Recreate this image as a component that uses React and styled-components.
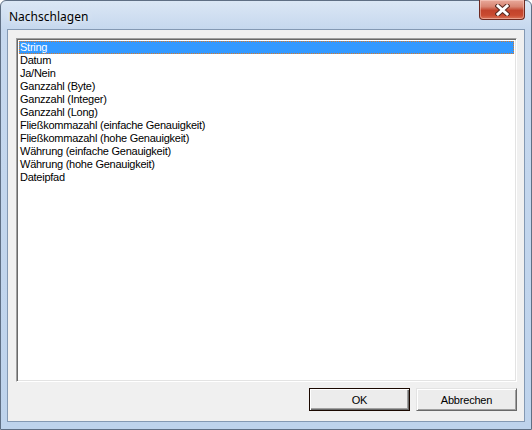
import React, { useState } from "react";
import styled, { createGlobalStyle } from "styled-components";

const Global = createGlobalStyle`
  html, body { margin: 0; padding: 0; background: #ffffff; }
  body { width: 532px; height: 430px; overflow: hidden; }
  * { box-sizing: border-box; }
`;

const Window = styled.div`
  width: 532px;
  height: 430px;
  border: 1px solid #5f6f84;
  border-radius: 6px 6px 0 0;
  background: linear-gradient(to bottom, #dbe7f5 0px, #c6d8ee 28px, #bed3ec 100%);
  padding: 0 6px 7px 6px;
  display: flex;
  flex-direction: column;
  font-family: "Liberation Sans", Arial, sans-serif;
`;

const TitleBar = styled.div`
  height: 28px;
  display: flex;
  align-items: flex-start;
  justify-content: space-between;
`;

const Title = styled.div`
  font-family: "Noto Sans", "Open Sans", sans-serif;
  font-size: 12px;
  color: #000;
  padding: 7px 0 0 2px;
  text-shadow: 0 0 6px rgba(255, 255, 255, 0.9);
`;

const CloseButton = styled.div`
  width: 46px;
  height: 20px;
  margin-top: -1px;
  margin-right: 0px;
  border: 1px solid #6e2a20;
  border-top: none;
  border-radius: 0 0 4px 4px;
  background: linear-gradient(to bottom, #e9a99b 0%, #d88572 35%, #c2432c 55%, #c94a30 80%, #d9745a 100%);
  box-shadow: inset 0 0 0 1px rgba(255, 220, 210, 0.45);
  display: flex;
  align-items: center;
  justify-content: center;
`;

const Client = styled.div`
  flex: 1;
  border: 1px solid #8499b3;
  background: #f0f0f0;
  padding: 8px 7px 9px 8px;
  display: flex;
  flex-direction: column;
`;

const ListBox = styled.div`
  height: 344px;
  background: #fff;
  border-style: solid;
  border-width: 1px;
  border-color: #a0a0a0 #ffffff #ffffff #a0a0a0;
  box-shadow: inset 1px 1px 0 #696969, inset -1px -1px 0 #e3e3e3;
  padding: 2px;
  display: flex;
  flex-direction: column;
`;

const Item = styled.div`
  height: 13px;
  line-height: 13px;
  font-size: 11px;
  letter-spacing: -0.25px;
  padding-left: 1px;
  white-space: nowrap;
  color: ${(p) => (p.$selected ? "#fff" : "#000")};
  background: ${(p) => (p.$selected ? "#3399ff" : "transparent")};
  outline: ${(p) => (p.$selected ? "1px dotted #d97a2a" : "none")};
  outline-offset: -1px;
`;

const ButtonRow = styled.div`
  margin-top: 6px;
  display: flex;
  justify-content: flex-end;
  gap: 6px;
`;

const Button = styled.div`
  width: 101px;
  height: 23px;
  font-size: 11px;
  letter-spacing: -0.2px;
  color: #000;
  display: flex;
  align-items: center;
  justify-content: center;
  background: #ececec;
  border: 1px solid;
  border-color: ${(p) => (p.$default ? "#1a0800" : "#e3e3e3 #696969 #696969 #e3e3e3")};
  box-shadow: ${(p) =>
    p.$default
      ? "inset 1px 1px 0 #fff, inset -1px -1px 0 #696969, inset -2px -2px 0 #a0a0a0"
      : "inset 1px 1px 0 #fff, inset -1px -1px 0 #a0a0a0"};
`;

const items = [
  "String",
  "Datum",
  "Ja/Nein",
  "Ganzzahl (Byte)",
  "Ganzzahl (Integer)",
  "Ganzzahl (Long)",
  "Fließkommazahl (einfache Genauigkeit)",
  "Fließkommazahl (hohe Genauigkeit)",
  "Währung (einfache Genauigkeit)",
  "Währung (hohe Genauigkeit)",
  "Dateipfad",
];

function CloseX() {
  return (
    <svg width="15" height="12" viewBox="0 0 15 12">
      <path d="M3 2 L12 10 M12 2 L3 10" stroke="#5a2a22" strokeWidth="5" strokeLinecap="square" />
      <path d="M3 2 L12 10 M12 2 L3 10" stroke="#ffffff" strokeWidth="3" strokeLinecap="square" />
    </svg>
  );
}

export default function App() {
  const [sel, setSel] = useState(0);
  return (
    <>
      <Global />
      <Window>
        <TitleBar>
          <Title>Nachschlagen</Title>
          <CloseButton>
            <CloseX />
          </CloseButton>
        </TitleBar>
        <Client>
          <ListBox>
            {items.map((t, i) => (
              <Item key={t} $selected={i === sel} onClick={() => setSel(i)}>
                {t}
              </Item>
            ))}
          </ListBox>
          <ButtonRow>
            <Button $default>OK</Button>
            <Button>Abbrechen</Button>
          </ButtonRow>
        </Client>
      </Window>
    </>
  );
}
